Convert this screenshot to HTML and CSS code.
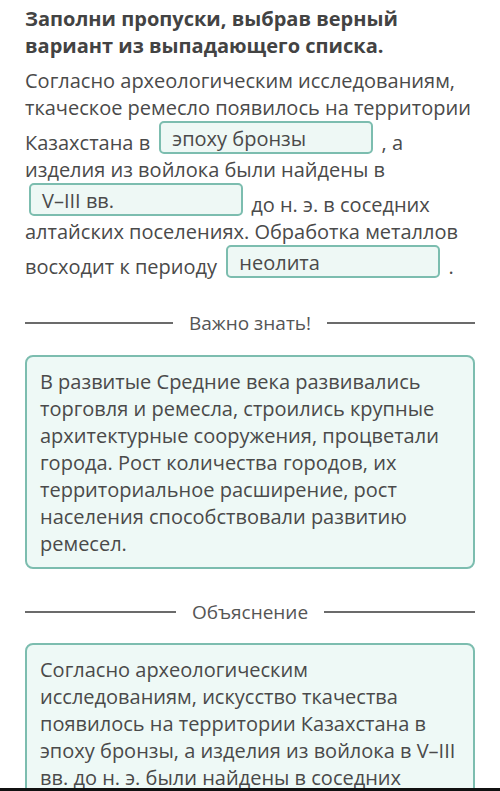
FILE: index.html
```html
<!DOCTYPE html>
<html lang="ru">
<head>
    <meta charset="UTF-8">
    <meta name="viewport" content="width=device-width, initial-scale=1.0">
    <title>Заполни пропуски</title>
    <link rel="stylesheet" href="styles.css">
</head>
<body>
    <div class="page">
        <div class="content">
            <!-- Task heading -->
            <h1 class="task-title">Заполни пропуски, выбрав верный вариант из выпадающего списка.</h1>

            <!-- Text with dropdown gaps -->
            <p class="task-text">
                Согласно археологическим исследованиям, ткаческое ремесло появилось на территории Казахстана в
                <span class="gap">эпоху бронзы</span> , а изделия из войлока были найдены в
                <span class="gap">V–III вв.</span> до н. э. в соседних алтайских поселениях. Обработка металлов восходит к периоду
                <span class="gap">неолита</span> .
            </p>

            <!-- Good to know -->
            <div class="divider">Важно знать!</div>
            <div class="note-card">
                В развитые Средние века развивались торговля и ремесла, строились крупные архитектурные сооружения, процветали города. Рост количества городов, их территориальное расширение, рост населения способствовали развитию ремесел.
            </div>

            <!-- Explanation -->
            <div class="divider">Объяснение</div>
            <div class="note-card">
                Согласно археологическим исследованиям, искусство ткачества появилось на территории Казахстана в эпоху бронзы, а изделия из войлока в V–III вв. до н. э. были найдены в соседних алтайских поселениях. Обработка металлов восходит к периоду энеолита.
            </div>
        </div>
        <div class="edge"></div>
    </div>
</body>
</html>
```

FILE: styles.css
```css
/* Page frame */
body {
    margin: 0;
    background: #ffffff;
    font-family: "Open Sans", "Noto Sans", sans-serif;
    color: #4a4a4a;
}

.page {
    height: 791px;
    display: flex;
    flex-direction: column;
}

.content {
    flex: 1;
    overflow: hidden;
    padding: 5px 25px 0 25px;
}

.edge {
    height: 3px;
    background: #111111;
}

/* Task heading */
.task-title {
    margin: 0;
    font-size: 20px;
    line-height: 27px;
    font-weight: 700;
    color: #434343;
}

/* Text with gaps */
.task-text {
    margin: 8px 0 0 0;
    font-size: 20px;
    line-height: 27px;
}

.gap {
    display: inline-block;
    overflow: hidden;
    box-sizing: border-box;
    width: 214px;
    height: 33px;
    margin: 0 3px 0 4px;
    padding: 3px 11px 0 11px;
    line-height: 26px;
    vertical-align: -4px;
    background: #eef8f5;
    border: 2px solid #7cbdaf;
    border-radius: 5px;
}

/* Section divider with lines on both sides */
.divider {
    display: flex;
    align-items: center;
    gap: 16px;
    margin: 30px 0 19px 0;
    font-size: 19px;
    line-height: 26px;
    color: #555555;
}

.divider::before,
.divider::after {
    content: "";
    flex: 1;
    height: 2px;
    background: #6b6b6b;
}

/* Info cards */
.note-card {
    padding: 11px 13px 10px 13px;
    font-size: 20px;
    line-height: 27px;
    background: #eef9f6;
    border: 2px solid #7cbdaf;
    border-radius: 8px;
}

.note-card + .divider {
    margin-top: 30px;
    margin-bottom: 18px;
}
```
